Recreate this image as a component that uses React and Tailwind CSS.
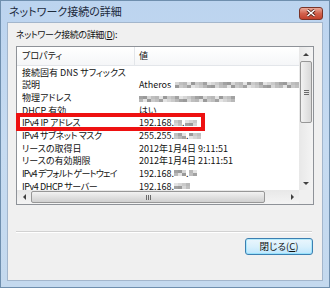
import React from "react";

const jp = "font-['Noto_Sans_CJK_JP','Noto_Sans',sans-serif] [font-feature-settings:'palt']";

const grays = [
  "bg-[#b8b8b8]",
  "bg-[#d6d6d6]",
  "bg-[#a2a2a2]",
  "bg-[#cacaca]",
  "bg-[#e4e4e4]",
  "bg-[#bfbfbf]",
  "bg-[#9a9a9a]",
];

const Blur = ({ cols, seed = 0 }) => {
  const cells = [];
  for (let r = 0; r < 2; r++) {
    for (let c = 0; c < cols; c++) {
      cells.push(grays[(c * 3 + r * 5 + seed + ((c * c) % 4)) % grays.length]);
    }
  }
  return (
    <span
      className="inline-grid align-middle"
      style={{ gridTemplateColumns: `repeat(${cols}, 4px)` }}
    >
      {cells.map((cls, i) => (
        <span key={i} className={`h-[3px] w-[4px] ${cls}`} />
      ))}
    </span>
  );
};

const Value = ({ v }) => {
  if (v === "atheros")
    return (
      <span className="flex items-center gap-[4px]">
        <span>Atheros</span>
        <Blur cols={31} seed={1} />
      </span>
    );
  if (v === "mac") return <Blur cols={24} seed={2} />;
  if (v === "ip")
    return (
      <span className="flex items-center">
        <span>192.168.</span>
        <Blur cols={2} seed={3} />
        <span>.</span>
        <Blur cols={3} seed={4} />
      </span>
    );
  if (v === "mask")
    return (
      <span className="flex items-center">
        <span>255.255.</span>
        <Blur cols={3} seed={5} />
        <span>.</span>
        <Blur cols={3} seed={6} />
      </span>
    );
  if (v === "gw")
    return (
      <span className="flex items-center">
        <span>192.168.</span>
        <Blur cols={3} seed={2} />
        <span>.</span>
        <Blur cols={2} seed={0} />
      </span>
    );
  if (v === "dhcp")
    return (
      <span className="flex items-center">
        <span>192.168.</span>
        <Blur cols={4} seed={4} />
      </span>
    );
  return <span>{v}</span>;
};

// [property, value, letter spacing of the property text]
const rows = [
  ["接続固有 DNS サフィックス", "", ""],
  ["説明", "atheros", ""],
  ["物理アドレス", "mac", ""],
  ["DHCP 有効", "はい", ""],
  ["IPv4 IP アドレス", "ip", "tracking-[-0.3px]"],
  ["IPv4 サブネット マスク", "mask", "tracking-[-0.4px]"],
  ["リースの取得日", "2012年1月4日 9:11:51", ""],
  ["リースの有効期限", "2012年1月4日 21:11:51", ""],
  ["IPv4 デフォルト ゲートウェイ", "gw", "tracking-[-0.8px]"],
  ["IPv4 DHCP サーバー", "dhcp", "tracking-[-0.4px]"],
];

const Arrow = ({ dir }) => {
  const pts = {
    up: "1,4 4,1 7,4",
    down: "1,1 4,4 7,1",
    left: "4,1 1,4 4,7",
    right: "1,1 4,4 1,7",
  };
  const vert = dir === "up" || dir === "down";
  return (
    <svg width={vert ? 8 : 5} height={vert ? 5 : 8} viewBox={vert ? "0 0 8 5" : "0 0 5 8"}>
      <polygon points={pts[dir]} fill="#404040" />
    </svg>
  );
};

const App = () => {
  return (
    <div
      className={`relative flex h-[288px] w-[330px] flex-col overflow-hidden border border-[#6f8fae] bg-gradient-to-b from-[#bcd4ef] via-[#c6dbf1] to-[#c4d9ee] ${jp}`}
    >
      {/* title bar */}
      <div className="flex h-[21px] items-center justify-between pl-[8px] pr-[6px]">
        <span className="text-[11px] leading-none text-[#1c2a3c]">
          ネットワーク接続の詳細
        </span>
        <div className="mt-[3px] flex h-[13px] w-[24px] items-center justify-center rounded-[3px] border border-[#7a3428] bg-gradient-to-b from-[#e9a99a] via-[#d2624d] to-[#c2412c]">
          <svg width="10" height="8" viewBox="0 0 10 8">
            <path d="M1.5 1 L8.5 7 M8.5 1 L1.5 7" stroke="#4a1a12" strokeWidth="3" />
            <path d="M1.5 1 L8.5 7 M8.5 1 L1.5 7" stroke="#ffffff" strokeWidth="1.6" />
          </svg>
        </div>
      </div>

      {/* client area */}
      <div className="mx-[6px] mb-[6px] flex flex-1 flex-col border border-[#a3b6cc] bg-[#f0f0f0] px-[8px] pt-[4px] text-[9px] text-[#111111]">
        <div className="h-[19px] pt-[2px] leading-[12px] tracking-[-0.4px]">
          ネットワーク接続の詳細(<span className="underline">D</span>):
        </div>

        {/* list box */}
        <div className="flex h-[159px] w-[298px] flex-col border border-[#8e9298] bg-white">
          <div className="flex flex-1 overflow-hidden">
            <div className="flex flex-1 flex-col overflow-hidden">
              <div className="flex h-[19px] shrink-0 border-b border-[#e3e6ea] bg-gradient-to-b from-white to-[#f5f6f8]">
                <div className="flex w-[118px] items-center border-r border-[#e3e6ea] pl-[5px]">
                  プロパティ
                </div>
                <div className="flex items-center pl-[4px]">値</div>
              </div>
              {rows.map(([k, v, track], i) => (
                <div key={i} className="flex h-[12.65px] shrink-0 items-center leading-[11px] whitespace-nowrap">
                  <div className={`w-[118px] shrink-0 overflow-hidden pl-[5px] ${track}`}>{k}</div>
                  <div className="pl-[4px]">
                    <Value v={v} />
                  </div>
                </div>
              ))}
            </div>

            {/* vertical scrollbar */}
            <div className="flex w-[14px] shrink-0 flex-col items-center bg-gradient-to-r from-[#e8e8e8] to-[#f4f4f4]">
              <div className="flex h-[14px] items-center justify-center">
                <Arrow dir="up" />
              </div>
              <div className="flex h-[62px] w-[12px] items-center justify-center rounded-[2px] border border-[#979797] bg-gradient-to-r from-[#f2f2f2] to-[#d8d8d8]">
                <div className="flex flex-col gap-[1px]">
                  <div className="h-px w-[5px] bg-[#6a6a6a]" />
                  <div className="h-px w-[5px] bg-[#6a6a6a]" />
                  <div className="h-px w-[5px] bg-[#6a6a6a]" />
                </div>
              </div>
              <div className="flex-1" />
              <div className="flex h-[14px] items-center justify-center">
                <Arrow dir="down" />
              </div>
            </div>
          </div>

          {/* horizontal scrollbar */}
          <div className="flex h-[14px] shrink-0 items-center bg-gradient-to-b from-[#e8e8e8] to-[#f4f4f4]">
            <div className="flex w-[14px] justify-center">
              <Arrow dir="left" />
            </div>
            <div className="flex h-[12px] w-[234px] items-center justify-center rounded-[2px] border border-[#979797] bg-gradient-to-b from-[#f2f2f2] to-[#d0d0d0]">
              <div className="flex gap-[1px]">
                <div className="h-[5px] w-px bg-[#6a6a6a]" />
                <div className="h-[5px] w-px bg-[#6a6a6a]" />
                <div className="h-[5px] w-px bg-[#6a6a6a]" />
              </div>
            </div>
            <div className="flex-1" />
            <div className="flex w-[14px] justify-center">
              <Arrow dir="right" />
            </div>
            <div className="h-full w-[14px] bg-[#f0f0f0]" />
          </div>
        </div>

        {/* separator */}
        <div className="mt-[26px] h-[2px] w-[296px] border-t border-b border-t-[#d2d2d2] border-b-white" />

        <div className="mt-[5px] flex justify-end pr-[1px]">
          <div className="flex h-[17px] w-[68px] items-center justify-center rounded-[3px] border border-[#3c7fb1] bg-gradient-to-b from-[#eaf6fd] via-[#d9f0fc] to-[#bee6fd] text-[9.5px] leading-none shadow-[inset_0_0_0_1px_#48d8fb55]">
            閉じる(<span className="underline">C</span>)
          </div>
        </div>
      </div>

      {/* red highlight */}
      <div className="absolute left-[15px] top-[112px] h-[18px] w-[189px] border-[4px] border-[#ee1111]" />
    </div>
  );
};

export default App;
